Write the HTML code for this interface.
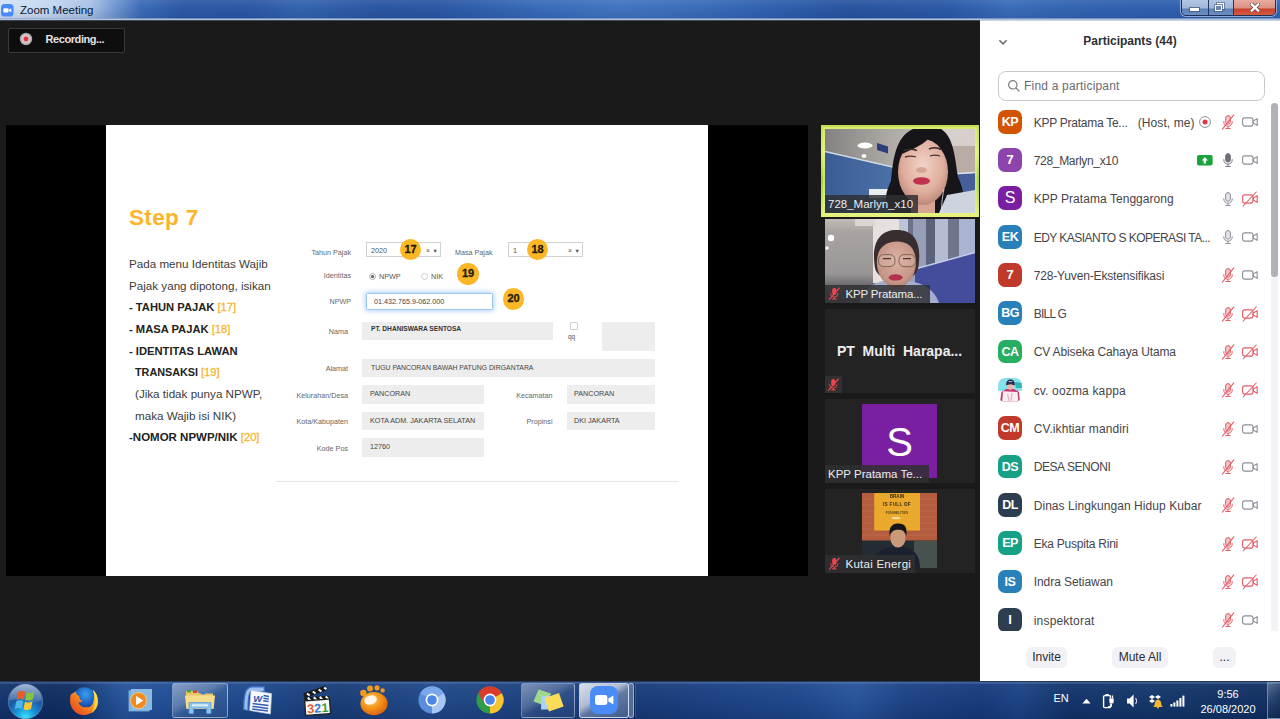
<!DOCTYPE html>
<html lang="en">
<head>
<meta charset="utf-8">
<title>Zoom Meeting</title>
<style>
html,body{margin:0;padding:0;}
body{width:1280px;height:719px;overflow:hidden;background:#1a1a1a;position:relative;font-family:"Liberation Sans","DejaVu Sans",sans-serif;}
.abs{position:absolute;}
#stage{position:absolute;left:0;top:0;width:1280px;height:719px;overflow:hidden;background:#1a1a1a;}
/* title bar */
#titlebar{left:0;top:0;width:1280px;height:20px;background:linear-gradient(90deg,#d3e2f5 0px,#c3d6ef 50px,#a9c3e6 90px,#6f97d0 115px,#3d6cb8 140px,#2c59a6 180px,#2b58a5 250px,#3463af 300px,#2a56a2 380px,#2b58a5 440px,#386bb9 540px,#4174c1 620px,#3a6cba 700px,#2f5fae 780px,#28549f 850px,#2c5aa8 950px,#3a6cba 1010px,#3465b3 1060px,#2f5fae 1150px,#3566b3 1280px);}
#titlebar .shade{left:0;top:0;width:1280px;height:20px;background:linear-gradient(180deg,rgba(255,255,255,.08) 0,rgba(255,255,255,0) 8px,rgba(0,0,30,.08) 17px,rgba(0,0,30,.10) 18px,rgba(140,165,205,.75) 18px,rgba(140,165,205,.75) 19px,rgba(176,194,222,1) 19px,rgba(176,194,222,1) 20px);}
#ttext{left:20px;top:3px;font-size:11.5px;line-height:15px;color:#0b1a33;white-space:nowrap;}
/* recording */
#rec{left:8px;top:28px;width:115px;height:23px;border:1px solid #3a3a3a;border-radius:2px;background:#0e0e0e;}
#rec span{position:absolute;left:36.5px;top:3px;font-size:11px;line-height:14px;font-weight:bold;color:#e2e2e2;white-space:nowrap;letter-spacing:-.42px;}
/* share area */
#share{left:6px;top:125px;width:802px;height:451px;background:#000;}
#slide{left:100px;top:0;width:601.5px;height:451px;background:#fff;overflow:hidden;}
.st{position:absolute;white-space:nowrap;color:#3c3c3c;font-size:11.65px;line-height:14px;}
.sb{font-weight:bold;color:#222;font-size:11.2px;}
.y{color:#f6b62e;font-weight:normal;font-size:11.2px;-webkit-text-stroke:.3px #f6b62e;}
.lab{position:absolute;white-space:nowrap;color:#666;font-size:7.2px;line-height:9px;text-align:right;}
.fld{position:absolute;background:#ededed;}
.fld span{position:absolute;left:8px;top:4.3px;white-space:nowrap;font-size:7.2px;line-height:9px;color:#444;}
.num{position:absolute;width:21.6px;height:21.6px;border-radius:50%;background:#fbb726;color:#221b06;font-weight:bold;font-size:11px;line-height:21.6px;text-align:center;-webkit-text-stroke:.3px #221b06;margin:-.8px 0 0 -.3px;}
/* thumbs */
.th{position:absolute;left:824.5px;width:150px;height:84px;background:#232323;overflow:hidden;}
.tl{position:absolute;left:0;bottom:0;height:17px;background:rgba(48,48,50,.84);color:#ececec;font-size:11.5px;line-height:17px;white-space:nowrap;padding:0 4px 0 4px;}
/* panel */
#panel{left:980px;top:20px;width:300px;height:661px;background:#fff;}
.row{position:absolute;left:0;width:300px;height:38px;}
.av{position:absolute;left:18px;top:-.3px;width:24px;height:23.8px;border-radius:7px;color:#fff;font-weight:bold;font-size:12.5px;line-height:24px;text-align:center;letter-spacing:-.5px;}
.nm{position:absolute;left:53.7px;top:4.6px;font-size:12px;line-height:16px;color:#45454b;white-space:nowrap;}
.btn{position:absolute;top:627px;height:21px;border-radius:6px;background:#f1f1f6;color:#2a2a30;font-size:12px;line-height:21px;text-align:center;}
/* taskbar */
#taskbar{left:0;top:681px;width:1280px;height:38px;background:linear-gradient(90deg,#12336c 0,#0e2b60 50px,#0f2d63 75px,#1b4485 100px,#245399 125px,#1f4d94 170px,#1c4688 260px,#183c77 340px,#1f4887 430px,#1b4180 520px,#173a78 640px,#1a4284 740px,#1d478a 800px,#25539a 855px,#1b4283 905px,#16397a 980px,#1a4283 1020px,#123269 1070px,#133569 1150px,#102e60 1280px);}
#taskbar .shade{left:0;top:0;width:1280px;height:38px;background:linear-gradient(180deg,rgba(40,55,85,.85) 0,rgba(40,55,85,.85) 1px,rgba(120,150,195,.42) 1px,rgba(110,140,190,.36) 3px,rgba(255,255,255,.05) 3px,rgba(255,255,255,.02) 16px,rgba(0,0,20,.10) 38px);}
.tray{position:absolute;color:#fff;font-size:11px;line-height:13px;white-space:nowrap;}
</style>
</head>
<body>
<div id="stage">

<!-- TITLE BAR -->
<div id="titlebar" class="abs">
  <div class="shade abs"></div>
  <svg class="abs" style="left:1px;top:4px" width="12.6" height="12.6" viewBox="0 0 14 14"><rect x="0" y="0" width="14" height="14" rx="4" fill="#4a8cf7"/><rect x="2.6" y="4.6" width="5.8" height="4.8" rx="1.2" fill="#fff"/><path d="M8.9 6.3 L11.4 4.8 V9.2 L8.9 7.7Z" fill="#fff"/></svg>
  <div id="ttext" class="abs">Zoom Meeting</div>
  <!-- window buttons -->
  <div class="abs" style="left:1181px;top:-3px;width:95px;height:19px;border:1px solid #1c2f55;border-radius:0 0 5px 5px;box-sizing:border-box;overflow:hidden;box-shadow:0 0 0 1px rgba(220,232,250,.55);">
    <div class="abs" style="left:0;top:0;width:26px;height:19px;background:linear-gradient(180deg,#b8cbe6 0,#9db6da 10px,#5c80b8 11px,#6f93c8 19px);border-right:1px solid #23375e;"></div>
    <div class="abs" style="left:27px;top:0;width:24px;height:19px;background:linear-gradient(180deg,#b8cbe6 0,#9db6da 10px,#5c80b8 11px,#6f93c8 19px);border-right:1px solid #23375e;"></div>
    <div class="abs" style="left:52px;top:0;width:43px;height:19px;background:linear-gradient(180deg,#e9b3a8 0,#dc8f82 10px,#c8402c 11px,#d8654c 19px);"></div>
    <div class="abs" style="left:8px;top:10px;width:9px;height:3px;background:#fff;box-shadow:0 0 0 1px rgba(60,70,90,.6);"></div>
    <div class="abs" style="left:35px;top:5px;width:7px;height:6px;border:1.5px solid #fff;box-sizing:border-box;box-shadow:0 0 0 1px rgba(60,70,90,.5);"></div>
    <div class="abs" style="left:33px;top:7px;width:7px;height:6px;border:1.5px solid #fff;background:#6a84b0;box-sizing:border-box;box-shadow:0 0 0 1px rgba(60,70,90,.5);"></div>
    <svg class="abs" style="left:68px;top:5px" width="10" height="9" viewBox="0 0 10 9"><path d="M1.8 1.4 L8.2 7.6 M8.2 1.4 L1.8 7.6" stroke="#5a4040" stroke-width="3.6" stroke-linecap="square"/><path d="M1.8 1.4 L8.2 7.6 M8.2 1.4 L1.8 7.6" stroke="#fff" stroke-width="2.3" stroke-linecap="square"/></svg>
  </div>
</div>

<div id="tline" class="abs" style="left:0;top:20px;width:1280px;height:1px;background:rgba(120,140,175,.4);z-index:5"></div>
<!-- RECORDING -->
<div id="rec" class="abs">
  <svg class="abs" style="left:10px;top:3px" width="14" height="14" viewBox="0 0 14 14"><circle cx="7" cy="7" r="6.2" fill="#a9a9a9"/><circle cx="7" cy="7" r="4.8" fill="#d4c8c8"/><circle cx="7" cy="7" r="2.4" fill="#e6343c"/></svg>
  <span>Recording...</span>
</div>

<!-- SHARE AREA -->
<div id="share" class="abs">
 <div id="slide" class="abs">
<!--SLIDE-START-->
  <div class="st" style="left:23px;top:78.7px;font-size:22.6px;line-height:28px;font-weight:bold;color:#fbb42c;letter-spacing:.3px;">Step 7</div>
  <div class="st" style="left:23px;top:132px;">Pada menu Identitas Wajib</div>
  <div class="st" style="left:23px;top:154px;">Pajak yang dipotong, isikan</div>
  <div class="st sb" style="left:23px;top:175px;">- TAHUN PAJAK <span class="y">[17]</span></div>
  <div class="st sb" style="left:23px;top:196.5px;">- MASA PAJAK <span class="y">[18]</span></div>
  <div class="st sb" style="left:23px;top:218.5px;">- IDENTITAS LAWAN</div>
  <div class="st sb" style="left:29px;top:240px;font-size:10.8px">TRANSAKSI <span class="y">[19]</span></div>
  <div class="st" style="left:29px;top:262px;">(Jika tidak punya NPWP,</div>
  <div class="st" style="left:29px;top:283.5px;">maka Wajib isi NIK)</div>
  <div class="st sb" style="left:23px;top:305px;font-size:11.5px;">-NOMOR NPWP/NIK <span class="y">[20]</span></div>

  <!-- form -->
  <div class="lab" style="left:185px;width:60px;top:122.5px;">Tahun Pajak</div>
  <div class="abs" style="left:260px;top:117px;width:74.5px;height:15px;border:1px solid #d2d2d2;box-sizing:border-box;background:#fff;"></div>
  <div class="lab" style="left:265px;top:120.5px;color:#555;">2020</div>
  <div class="lab" style="left:320px;top:120.5px;color:#555;font-size:7px;">×</div><div class="lab" style="left:327.5px;top:120.5px;color:#555;font-size:6.5px;">▾</div>
  <div class="num" style="left:294px;top:114.5px;">17</div>
  <div class="lab" style="left:349px;top:122.5px;">Masa Pajak</div>
  <div class="abs" style="left:401.5px;top:117px;width:75.5px;height:15px;border:1px solid #d2d2d2;box-sizing:border-box;background:#fff;"></div>
  <div class="lab" style="left:407px;top:120.5px;color:#555;">1</div>
  <div class="lab" style="left:462px;top:120.5px;color:#555;font-size:7px;">×</div><div class="lab" style="left:469.5px;top:120.5px;color:#555;font-size:6.5px;">▾</div>
  <div class="num" style="left:421px;top:114.5px;">18</div>

  <div class="lab" style="left:185px;width:60px;top:146px;">Identitas</div>
  <div class="abs" style="left:263px;top:147.5px;width:7px;height:7px;border-radius:50%;border:1px solid #aaa;box-sizing:border-box;background:#fff;"></div>
  <div class="abs" style="left:265px;top:149.5px;width:3px;height:3px;border-radius:50%;background:#555;"></div>
  <div class="lab" style="left:273px;top:146.5px;color:#555;">NPWP</div>
  <div class="abs" style="left:314.5px;top:147.5px;width:7px;height:7px;border-radius:50%;border:1px solid #ccc;box-sizing:border-box;background:#fff;"></div>
  <div class="lab" style="left:325px;top:146.5px;color:#555;">NIK</div>
  <div class="num" style="left:351.5px;top:139px;">19</div>

  <div class="lab" style="left:185px;width:60px;top:172px;">NPWP</div>
  <div class="abs" style="left:260px;top:167.5px;width:126.5px;height:17.5px;border:1px solid #9cc8f0;box-sizing:border-box;background:#fff;box-shadow:0 0 5px 1px rgba(120,180,240,.6);border-radius:1.5px;"></div>
  <div class="lab" style="left:268px;top:171.5px;color:#444;">01.432.765.9-062.000</div>
  <div class="num" style="left:397px;top:164px;">20</div>

  <div class="lab" style="left:185px;width:57px;top:202px;">Nama</div>
  <div class="fld" style="left:256px;top:196.5px;width:190.5px;height:18.5px;"><span style="top:2.8px;left:9px;color:#333;font-weight:bold;font-size:6.6px">PT. DHANISWARA SENTOSA</span></div>
  <div class="abs" style="left:464px;top:197px;width:8px;height:8px;border:1px solid #d0d0d0;box-sizing:border-box;border-radius:1px;background:#fff;"></div>
  <div class="lab" style="left:462px;top:206.5px;color:#555;font-size:6.5px;">qq</div>
  <div class="fld" style="left:495.5px;top:196.5px;width:53px;height:29px;"></div>

  <div class="lab" style="left:185px;width:57px;top:239px;">Alamat</div>
  <div class="fld" style="left:256px;top:234px;width:292.5px;height:18px;"><span style="left:9px;top:3.6px;font-size:6.88px">TUGU PANCORAN BAWAH PATUNG DIRGANTARA</span></div>

  <div class="lab" style="left:185px;width:57px;top:265.5px;">Kelurahan/Desa</div>
  <div class="fld" style="left:256px;top:260px;width:122px;height:18.5px;"><span>PANCORAN</span></div>
  <div class="lab" style="left:390px;width:56.5px;top:265.5px;">Kecamatan</div>
  <div class="fld" style="left:461px;top:260px;width:87.5px;height:18.5px;"><span style="left:7px">PANCORAN</span></div>

  <div class="lab" style="left:185px;width:57px;top:292px;">Kota/Kabupaten</div>
  <div class="fld" style="left:256px;top:286.5px;width:122px;height:18.5px;"><span>KOTA ADM. JAKARTA SELATAN</span></div>
  <div class="lab" style="left:390px;width:56.5px;top:292px;">Propinsi</div>
  <div class="fld" style="left:461px;top:286.5px;width:87.5px;height:18.5px;"><span style="left:7px">DKI JAKARTA</span></div>

  <div class="lab" style="left:185px;width:57px;top:318.5px;">Kode Pos</div>
  <div class="fld" style="left:256px;top:313px;width:122px;height:18.5px;"><span>12760</span></div>

  <div class="abs" style="left:170px;top:355.5px;width:403px;height:1px;background:#e4e4e4;"></div>
<!--SLIDE-END-->
 </div>
</div>

<!--THUMBS-START-->
<div class="abs" style="left:821px;top:125px;width:158px;height:92px;background:linear-gradient(180deg,#c3dc52 0,#dff07a 30%,#a6d43a 60%,#e6f27c 100%);"></div>
<div class="abs" style="left:823px;top:127px;width:154px;height:88px;background:#e6f590;opacity:.55"></div>
<div class="th" style="top:129px;left:825px;width:149.5px">
<svg class="abs" style="left:0;top:0;filter:blur(.7px)" width="150" height="84" viewBox="0 0 150 84">
<defs><linearGradient id="c1" x1="0" x2="1" y1="0" y2="0"><stop offset="0" stop-color="#858180"/><stop offset=".3" stop-color="#a19e9a"/><stop offset=".6" stop-color="#bdb7b2"/><stop offset="1" stop-color="#cfc7c2"/></linearGradient>
<linearGradient id="b1" x1="0" x2="1"><stop offset="0" stop-color="#3a5c94"/><stop offset="1" stop-color="#4c72aa"/></linearGradient>
<radialGradient id="f1" cx=".5" cy=".4" r=".62"><stop offset="0" stop-color="#f1d3c8"/><stop offset=".65" stop-color="#dfae9d"/><stop offset="1" stop-color="#bb8474"/></radialGradient></defs>
<rect width="150" height="84" fill="url(#c1)"/>
<path d="M0 23 L70 39 L70 84 L0 84Z" fill="url(#b1)"/>
<path d="M0 22.5 L70 38.5" stroke="#cfd8e6" stroke-width="1.6"/>
<rect x="118" y="17" width="32" height="29" fill="#b9aca4"/>
<rect x="118" y="0" width="32" height="17" fill="#d6cfcb"/>
<path d="M118 46 L150 44 V84 H118Z" fill="#465f98"/>
<path d="M118 45.5 L150 43.5" stroke="#dde2ee" stroke-width="1.6"/>
<ellipse cx="40" cy="16.5" rx="7.5" ry="3" fill="#fff"/><ellipse cx="39" cy="27" rx="2.5" ry="2" fill="#f4f4f4"/>
<path d="M52 14 L63 17.5 V24.5 L52 21Z" fill="#2b3d7a"/>
<path d="M44 60 h19 v9 h-19z" fill="#e9edf2"/>
<path d="M72 84 C57 84 59 66 66 52 C68 32 70 8 88 0 L116 0 C129 8 130 30 133 48 C139 60 141 76 135 84Z" fill="#15151a"/>
<path d="M122 66 L150 61 V84 H114Z" fill="#cdd3df"/>
<path d="M86 62 h24 v22 h-24z" fill="#d7a594"/>
<ellipse cx="98" cy="43" rx="25" ry="33" fill="url(#f1)"/>
<path d="M71 40 C72 10 90 0 108 3 C121 7 126 22 125 38 C120 22 112 11 104 9 C96 18 82 22 75 26 C73 30 72 35 71 40Z" fill="#15151a"/>
<path d="M79 21.5 q7 -2.5 13 0 M104 20 q7 -2.5 12 .5" stroke="#3a2a28" stroke-width="1.5" fill="none"/>
<path d="M80 28 q6 -1.6 11 0 M105 27 q5 -1.6 10 0" stroke="#4a3430" stroke-width="1.3" fill="none"/>
<ellipse cx="96.5" cy="41" rx="5.5" ry="3" fill="#c48c7e" opacity=".6"/>
<ellipse cx="96.5" cy="52" rx="8.5" ry="3.8" fill="#c2324e"/>
<path d="M119 60 C117 70 116 78 117 84" stroke="#e8e8ee" stroke-width=".8" fill="none"/>
</svg>
<div class="tl" style="height:18px;line-height:19px;padding-left:3px;width:86px;">728_Marlyn_x10</div></div>
<div class="th" style="top:219px">
<svg class="abs" style="left:0;top:0;filter:blur(.7px)" width="150" height="84" viewBox="0 0 150 84">
<defs><linearGradient id="w2" x1="0" x2="0" y1="0" y2="1"><stop offset="0" stop-color="#c2bcb8"/><stop offset=".15" stop-color="#a9a4a2"/><stop offset=".65" stop-color="#999596"/><stop offset=".78" stop-color="#6f6d72"/><stop offset="1" stop-color="#5e5d66"/></linearGradient>
<radialGradient id="f2" cx=".5" cy=".45" r=".62"><stop offset="0" stop-color="#dcb3a6"/><stop offset=".75" stop-color="#c69586"/><stop offset="1" stop-color="#a07064"/></radialGradient></defs>
<rect width="150" height="84" fill="#98a2be"/>
<rect width="50" height="84" fill="url(#w2)"/>
<rect x="48" y="0" width="27" height="64" fill="#e6e1de"/>
<rect x="30" y="0" width="20" height="7" fill="#dcd6d2"/>
<rect x="74" y="0" width="9" height="52" fill="#bcc4d8"/><rect x="83" y="0" width="5" height="52" fill="#6a738a"/><rect x="88" y="0" width="13" height="50" fill="#979fb8"/><rect x="101" y="0" width="9" height="47" fill="#5a6379"/><rect x="110" y="0" width="13" height="44" fill="#b4bcd2"/><rect x="123" y="0" width="11" height="41" fill="#6e768e"/><rect x="134" y="0" width="16" height="38" fill="#aab4d0"/>
<path d="M90 50 L150 33.4 V84 H90Z" fill="#444c9c"/>
<path d="M90 50 L150 33.4" stroke="#c3cbe6" stroke-width="1.5"/>
<circle cx="6" cy="19" r="3.2" fill="#fff"/><circle cx="2" cy="29" r="1.8" fill="#f2f2f2"/>
<path d="M34 84 C38 68 52 61 70 61 C90 61 108 66 114 84Z" fill="#a4acd0"/>
<path d="M62 58 h18 v12 h-18z" fill="#c08e80"/>
<path d="M49.6 46 C46 20 58 10.6 72 11 C88 11 97 22 93.6 46 C93 52 90 56 86 58 L58 58 C53 56 50 52 49.6 46Z" fill="#382e30"/>
<ellipse cx="71.4" cy="43.6" rx="19.6" ry="24.4" fill="url(#f2)"/>
<path d="M51.4 37 C52 21 62 15 72 15 C84 15 91.4 21 92 37 C88 27 82 22.6 72 22.4 C62 22.6 55 27 51.4 37Z" fill="#382e30"/>
<rect x="53.6" y="35.6" width="16.4" height="12" rx="5" fill="#d9b7aa" fill-opacity=".35" stroke="#7a6656" stroke-width="1"/><rect x="74" y="35.6" width="16.4" height="12" rx="5" fill="#d9b7aa" fill-opacity=".35" stroke="#7a6656" stroke-width="1"/>
<path d="M58 39.6 h8 M78 39.6 h8" stroke="#4a3a36" stroke-width="1.2"/>
<ellipse cx="70.6" cy="58.4" rx="7" ry="3.2" fill="#b5304e"/>
</svg>
<div class="tl" style="height:18px;line-height:19px;padding-left:21px;width:80px;letter-spacing:-.16px">KPP Pratama...</div><svg class="abs" style="left:3px;top:68.2px" width="12.6" height="13.4" viewBox="0 0 13 14"><rect x="4.3" y="1" width="4.4" height="7.4" rx="2.2" fill="#e8464e"/><path d="M2.6 6.2 V6.6 A3.9 3.9 0 0 0 10.4 6.6 V6.2" fill="none" stroke="#e8464e" stroke-width="1"/><path d="M6.5 10.4 V12.2 M4.4 12.4 H8.6" stroke="#e8464e" stroke-width="1.1"/><path d="M12 0.8 L1.2 13.2" stroke="#e8464e" stroke-width="1.3"/></svg></div>
<div class="th" style="top:309px">
<div class="abs" style="left:0;top:32.6px;width:150px;text-align:center;font-weight:bold;font-size:14px;line-height:18px;color:#ededed;white-space:nowrap;">PT&nbsp; Multi&nbsp; Harapa...</div>
<div class="abs" style="left:0;top:67px;width:17px;height:17px;background:#313131;"></div><svg class="abs" style="left:2px;top:68.5px" width="12.6" height="13.4" viewBox="0 0 13 14"><rect x="4.3" y="1" width="4.4" height="7.4" rx="2.2" fill="#e8464e"/><path d="M2.6 6.2 V6.6 A3.9 3.9 0 0 0 10.4 6.6 V6.2" fill="none" stroke="#e8464e" stroke-width="1"/><path d="M6.5 10.4 V12.2 M4.4 12.4 H8.6" stroke="#e8464e" stroke-width="1.1"/><path d="M12 0.8 L1.2 13.2" stroke="#e8464e" stroke-width="1.3"/></svg></div>
<div class="th" style="top:399px">
<div class="abs" style="left:37.8px;top:4.9px;width:74.6px;height:74.6px;background:#7b1fa2;color:#fff;font-size:40px;line-height:76px;text-align:center;">S</div>
<div class="tl" style="height:18px;line-height:19px;padding-left:3.5px;width:97px;">KPP Pratama Te...</div></div>
<div class="th" style="top:489px">
<svg class="abs" style="left:37.8px;top:4.4px;filter:blur(.45px)" width="75" height="75" viewBox="0 0 75 75">
<rect width="75" height="75" fill="#b35c3e"/>
<g stroke="#c98268" stroke-width=".6" opacity=".7"><path d="M0 6H75M0 12H75M0 18H75M0 24H75M0 30H75M0 36H75M0 42H75"/></g>
<rect x="12.2" y="0" width="45.8" height="37.5" fill="#eaa82c"/>
<text x="35" y="4.5" font-family="Liberation Sans, sans-serif" font-weight="bold" font-size="4.6" text-anchor="middle" fill="#3a2c10">BRAIN</text>
<text x="35" y="13.2" font-family="Liberation Sans, sans-serif" font-weight="bold" font-size="4.6" text-anchor="middle" fill="#3a2c10" letter-spacing=".3">IS FULL OF</text>
<text x="35" y="20.6" font-family="Liberation Sans, sans-serif" font-weight="bold" font-size="2.6" text-anchor="middle" fill="#4a3812" letter-spacing=".3">POSSIBILITIES</text>
<ellipse cx="34" cy="25" rx="4.5" ry="1.3" fill="#f6dc9a"/>
<rect x="0" y="47.5" width="75" height="27.5" fill="#232b33"/>
<rect x="52" y="48" width="23" height="27" fill="#47524f"/>
<path d="M8 75 C10 58 22 54 36 54 C50 54 58 60 58 75Z" fill="#1b2130"/>
<ellipse cx="36" cy="45" rx="7.6" ry="9.6" fill="#c9997a"/>
<path d="M27.6 43 C26.5 33 31 30.6 36.5 30.6 C42.5 30.6 45.6 34 44.4 43 C43 38 40 36.6 36 36.8 C32 36.8 29 38.4 27.6 43Z" fill="#15151a"/>
</svg>
<div class="tl" style="height:18px;line-height:19px;padding-left:21px;width:65.5px;letter-spacing:.25px">Kutai Energi</div><svg class="abs" style="left:3px;top:68.2px" width="12.6" height="13.4" viewBox="0 0 13 14"><rect x="4.3" y="1" width="4.4" height="7.4" rx="2.2" fill="#e8464e"/><path d="M2.6 6.2 V6.6 A3.9 3.9 0 0 0 10.4 6.6 V6.2" fill="none" stroke="#e8464e" stroke-width="1"/><path d="M6.5 10.4 V12.2 M4.4 12.4 H8.6" stroke="#e8464e" stroke-width="1.1"/><path d="M12 0.8 L1.2 13.2" stroke="#e8464e" stroke-width="1.3"/></svg></div>
<!--THUMBS-END-->

<!-- PANEL -->
<div id="panel" class="abs">
<!--PANEL-START-->
 <svg class="abs" style="left:17px;top:17px" width="12" height="10" viewBox="0 0 12 10"><path d="M2.4 3.2 L6 6.8 L9.6 3.2" fill="none" stroke="#6e6e78" stroke-width="1.6"/></svg>
 <div class="abs" style="left:0;top:13px;width:300px;text-align:center;font-weight:bold;font-size:12px;line-height:16px;color:#2f2f35;">Participants (44)</div>
 <div class="abs" style="left:18px;top:51px;width:267px;height:30px;border:1px solid #c9c9cf;border-radius:8px;box-sizing:border-box;"></div>
 <svg class="abs" style="left:27px;top:59px" width="14" height="14" viewBox="0 0 14 14"><circle cx="5.8" cy="5.8" r="4.2" fill="none" stroke="#7a7a84" stroke-width="1.2"/><path d="M8.9 8.9 L12.4 12.4" stroke="#7a7a84" stroke-width="1.3"/></svg>
 <div class="abs" style="left:44px;top:57.5px;font-size:12px;line-height:16px;color:#6a6a72;letter-spacing:.2px;">Find a participant</div>
 <div class="abs" style="left:291px;top:83px;width:7px;height:528px;background:#f2f2f7;"></div>
 <div class="abs" style="left:291px;top:83px;width:7px;height:174px;background:#b1b1bb;border-radius:3.5px;"></div>
 <div class="abs" style="left:0;top:611px;width:300px;height:50px;background:#fff;"></div>
<div class="row" style="top:90.0px">
<div class="av" style="background:#d35400;">KP</div>
<div class="nm" style="letter-spacing:-0.26px">KPP Pratama Te...<span style="position:absolute;left:104px;top:0;letter-spacing:.1px">(Host, me)</span></div>
<svg class="abs" style="left:218px;top:5px" width="14" height="14" viewBox="0 0 14 14"><circle cx="7" cy="7" r="5.4" fill="none" stroke="#8e8e9a" stroke-width="1"/><circle cx="7" cy="7" r="2.5" fill="#e63946"/></svg>
<svg class="abs" style="left:240px;top:4px" width="16" height="16" viewBox="0 0 16 16" fill="none" stroke="#e35d66" stroke-width="1" stroke-linecap="round"><rect x="5.6" y="1.6" width="4.8" height="8.6" rx="2.4" fill="#f6c6c9"/><path d="M3.8 7.6 V8 A4.2 4.2 0 0 0 12.2 8 V7.6"/><path d="M8 12.4 V14.4 M5.8 14.5 H10.2"/><path d="M13.8 0.8 L2.4 15.2" stroke-width="1.05"/></svg>
<svg class="abs" style="left:261px;top:4px" width="18" height="16" viewBox="0 0 18 16" fill="none" stroke="#8e8e9a" stroke-width="1.1" stroke-linejoin="round" stroke-linecap="round"><rect x="1.6" y="3.9" width="10.4" height="8.2" rx="2"/><path d="M12.3 7 L16.2 4.6 V11.4 L12.3 9 Z"/></svg>
</div>
<div class="row" style="top:128.3px">
<div class="av" style="background:#8e44ad;font-size:13px;letter-spacing:0;">7</div>
<div class="nm" style="letter-spacing:-0.31px">728_Marlyn_x10</div>
<svg class="abs" style="left:217px;top:6.5px" width="16" height="11" viewBox="0 0 16 11"><rect width="15.6" height="10.6" rx="2" fill="#19a33a"/><path d="M7.8 2.2 L11 5.6 H9 V8.4 H6.6 V5.6 H4.6Z" fill="#fff"/></svg>
<svg class="abs" style="left:240px;top:4px" width="16" height="16" viewBox="0 0 16 16" fill="none" stroke="#7a7a86" stroke-width="1" stroke-linecap="round"><rect x="5.6" y="1.6" width="4.8" height="8.6" rx="2.4" fill="#6e6e7a"/><path d="M3.8 7.6 V8 A4.2 4.2 0 0 0 12.2 8 V7.6"/><path d="M8 12.4 V14.4 M5.8 14.5 H10.2"/></svg>
<svg class="abs" style="left:261px;top:4px" width="18" height="16" viewBox="0 0 18 16" fill="none" stroke="#8e8e9a" stroke-width="1.1" stroke-linejoin="round" stroke-linecap="round"><rect x="1.6" y="3.9" width="10.4" height="8.2" rx="2"/><path d="M12.3 7 L16.2 4.6 V11.4 L12.3 9 Z"/></svg>
</div>
<div class="row" style="top:166.6px">
<div class="av" style="background:#7b1fa2;font-size:16px;font-weight:normal;letter-spacing:0;">S</div>
<div class="nm" style="letter-spacing:0.05px">KPP Pratama Tenggarong</div>
<svg class="abs" style="left:240px;top:4px" width="16" height="16" viewBox="0 0 16 16" fill="none" stroke="#8e8e9a" stroke-width="1" stroke-linecap="round"><rect x="5.6" y="1.6" width="4.8" height="8.6" rx="2.4" fill="#e4e4ea"/><path d="M3.8 7.6 V8 A4.2 4.2 0 0 0 12.2 8 V7.6"/><path d="M8 12.4 V14.4 M5.8 14.5 H10.2"/></svg>
<svg class="abs" style="left:261px;top:4px" width="18" height="16" viewBox="0 0 18 16" fill="none" stroke="#e35d66" stroke-width="1.1" stroke-linejoin="round" stroke-linecap="round"><rect x="1.6" y="3.9" width="10.4" height="8.2" rx="2"/><path d="M12.3 7 L16.2 4.6 V11.4 L12.3 9 Z"/><path d="M15.2 1 L2.2 15"/></svg>
</div>
<div class="row" style="top:205.0px">
<div class="av" style="background:#2980b9;">EK</div>
<div class="nm" style="letter-spacing:-0.53px">EDY KASIANTO S KOPERASI TA...</div>
<svg class="abs" style="left:240px;top:4px" width="16" height="16" viewBox="0 0 16 16" fill="none" stroke="#8e8e9a" stroke-width="1" stroke-linecap="round"><rect x="5.6" y="1.6" width="4.8" height="8.6" rx="2.4" fill="#e4e4ea"/><path d="M3.8 7.6 V8 A4.2 4.2 0 0 0 12.2 8 V7.6"/><path d="M8 12.4 V14.4 M5.8 14.5 H10.2"/></svg>
<svg class="abs" style="left:261px;top:4px" width="18" height="16" viewBox="0 0 18 16" fill="none" stroke="#8e8e9a" stroke-width="1.1" stroke-linejoin="round" stroke-linecap="round"><rect x="1.6" y="3.9" width="10.4" height="8.2" rx="2"/><path d="M12.3 7 L16.2 4.6 V11.4 L12.3 9 Z"/></svg>
</div>
<div class="row" style="top:243.3px">
<div class="av" style="background:#c0392b;font-size:13px;letter-spacing:0;">7</div>
<div class="nm" style="letter-spacing:-0.15px">728-Yuven-Ekstensifikasi</div>
<svg class="abs" style="left:240px;top:4px" width="16" height="16" viewBox="0 0 16 16" fill="none" stroke="#e35d66" stroke-width="1" stroke-linecap="round"><rect x="5.6" y="1.6" width="4.8" height="8.6" rx="2.4" fill="#f6c6c9"/><path d="M3.8 7.6 V8 A4.2 4.2 0 0 0 12.2 8 V7.6"/><path d="M8 12.4 V14.4 M5.8 14.5 H10.2"/><path d="M13.8 0.8 L2.4 15.2" stroke-width="1.05"/></svg>
<svg class="abs" style="left:261px;top:4px" width="18" height="16" viewBox="0 0 18 16" fill="none" stroke="#8e8e9a" stroke-width="1.1" stroke-linejoin="round" stroke-linecap="round"><rect x="1.6" y="3.9" width="10.4" height="8.2" rx="2"/><path d="M12.3 7 L16.2 4.6 V11.4 L12.3 9 Z"/></svg>
</div>
<div class="row" style="top:281.6px">
<div class="av" style="background:#2980b9;">BG</div>
<div class="nm" style="letter-spacing:-0.75px">BILL G</div>
<svg class="abs" style="left:240px;top:4px" width="16" height="16" viewBox="0 0 16 16" fill="none" stroke="#e35d66" stroke-width="1" stroke-linecap="round"><rect x="5.6" y="1.6" width="4.8" height="8.6" rx="2.4" fill="#f6c6c9"/><path d="M3.8 7.6 V8 A4.2 4.2 0 0 0 12.2 8 V7.6"/><path d="M8 12.4 V14.4 M5.8 14.5 H10.2"/><path d="M13.8 0.8 L2.4 15.2" stroke-width="1.05"/></svg>
<svg class="abs" style="left:261px;top:4px" width="18" height="16" viewBox="0 0 18 16" fill="none" stroke="#e35d66" stroke-width="1.1" stroke-linejoin="round" stroke-linecap="round"><rect x="1.6" y="3.9" width="10.4" height="8.2" rx="2"/><path d="M12.3 7 L16.2 4.6 V11.4 L12.3 9 Z"/><path d="M15.2 1 L2.2 15"/></svg>
</div>
<div class="row" style="top:319.9px">
<div class="av" style="background:#27ae60;">CA</div>
<div class="nm" style="letter-spacing:-0.14px">CV Abiseka Cahaya Utama</div>
<svg class="abs" style="left:240px;top:4px" width="16" height="16" viewBox="0 0 16 16" fill="none" stroke="#e35d66" stroke-width="1" stroke-linecap="round"><rect x="5.6" y="1.6" width="4.8" height="8.6" rx="2.4" fill="#f6c6c9"/><path d="M3.8 7.6 V8 A4.2 4.2 0 0 0 12.2 8 V7.6"/><path d="M8 12.4 V14.4 M5.8 14.5 H10.2"/><path d="M13.8 0.8 L2.4 15.2" stroke-width="1.05"/></svg>
<svg class="abs" style="left:261px;top:4px" width="18" height="16" viewBox="0 0 18 16" fill="none" stroke="#e35d66" stroke-width="1.1" stroke-linejoin="round" stroke-linecap="round"><rect x="1.6" y="3.9" width="10.4" height="8.2" rx="2"/><path d="M12.3 7 L16.2 4.6 V11.4 L12.3 9 Z"/><path d="M15.2 1 L2.2 15"/></svg>
</div>
<div class="row" style="top:358.2px">
<svg class="av" style="border-radius:7px;filter:blur(.35px)" width="24" height="24" viewBox="0 0 24 24"><rect width="24" height="24" fill="#fdfdfd"/><rect width="24" height="13" fill="#86e2ea"/><path d="M17 4 L24 5 V10 L18 10Z" fill="#2fb4b8"/><path d="M2 24 L3.4 14 Q12 7 21 14 L22 24Z" fill="#c8356f"/><path d="M5 13.4 L19.6 14 L20.4 24 H4Z" fill="#f6eef2"/><path d="M9.6 16 L11 23 M14 15 L13 23" stroke="#e7a9c6" stroke-width="1.2"/><ellipse cx="12.4" cy="8.6" rx="3" ry="3.3" fill="#e9b9b0"/><path d="M8 7.4 Q8 1.6 12.4 1.6 Q17 1.6 17 7.4 L15.4 7 Q12.4 5.4 9.6 7Z" fill="#28324f"/><path d="M10.4 3.6 h4" stroke="#c9d3e6" stroke-width=".8"/></svg>
<div class="nm" style="letter-spacing:0.16px">cv. oozma kappa</div>
<svg class="abs" style="left:240px;top:4px" width="16" height="16" viewBox="0 0 16 16" fill="none" stroke="#e35d66" stroke-width="1" stroke-linecap="round"><rect x="5.6" y="1.6" width="4.8" height="8.6" rx="2.4" fill="#f6c6c9"/><path d="M3.8 7.6 V8 A4.2 4.2 0 0 0 12.2 8 V7.6"/><path d="M8 12.4 V14.4 M5.8 14.5 H10.2"/><path d="M13.8 0.8 L2.4 15.2" stroke-width="1.05"/></svg>
<svg class="abs" style="left:261px;top:4px" width="18" height="16" viewBox="0 0 18 16" fill="none" stroke="#e35d66" stroke-width="1.1" stroke-linejoin="round" stroke-linecap="round"><rect x="1.6" y="3.9" width="10.4" height="8.2" rx="2"/><path d="M12.3 7 L16.2 4.6 V11.4 L12.3 9 Z"/><path d="M15.2 1 L2.2 15"/></svg>
</div>
<div class="row" style="top:396.6px">
<div class="av" style="background:#c0392b;">CM</div>
<div class="nm" style="letter-spacing:0.08px">CV.ikhtiar mandiri</div>
<svg class="abs" style="left:240px;top:4px" width="16" height="16" viewBox="0 0 16 16" fill="none" stroke="#e35d66" stroke-width="1" stroke-linecap="round"><rect x="5.6" y="1.6" width="4.8" height="8.6" rx="2.4" fill="#f6c6c9"/><path d="M3.8 7.6 V8 A4.2 4.2 0 0 0 12.2 8 V7.6"/><path d="M8 12.4 V14.4 M5.8 14.5 H10.2"/><path d="M13.8 0.8 L2.4 15.2" stroke-width="1.05"/></svg>
<svg class="abs" style="left:261px;top:4px" width="18" height="16" viewBox="0 0 18 16" fill="none" stroke="#8e8e9a" stroke-width="1.1" stroke-linejoin="round" stroke-linecap="round"><rect x="1.6" y="3.9" width="10.4" height="8.2" rx="2"/><path d="M12.3 7 L16.2 4.6 V11.4 L12.3 9 Z"/></svg>
</div>
<div class="row" style="top:434.9px">
<div class="av" style="background:#16a085;">DS</div>
<div class="nm" style="letter-spacing:-0.43px">DESA SENONI</div>
<svg class="abs" style="left:240px;top:4px" width="16" height="16" viewBox="0 0 16 16" fill="none" stroke="#e35d66" stroke-width="1" stroke-linecap="round"><rect x="5.6" y="1.6" width="4.8" height="8.6" rx="2.4" fill="#f6c6c9"/><path d="M3.8 7.6 V8 A4.2 4.2 0 0 0 12.2 8 V7.6"/><path d="M8 12.4 V14.4 M5.8 14.5 H10.2"/><path d="M13.8 0.8 L2.4 15.2" stroke-width="1.05"/></svg>
<svg class="abs" style="left:261px;top:4px" width="18" height="16" viewBox="0 0 18 16" fill="none" stroke="#8e8e9a" stroke-width="1.1" stroke-linejoin="round" stroke-linecap="round"><rect x="1.6" y="3.9" width="10.4" height="8.2" rx="2"/><path d="M12.3 7 L16.2 4.6 V11.4 L12.3 9 Z"/></svg>
</div>
<div class="row" style="top:473.2px">
<div class="av" style="background:#2c3e50;">DL</div>
<div class="nm" style="letter-spacing:0.06px">Dinas Lingkungan Hidup Kubar</div>
<svg class="abs" style="left:240px;top:4px" width="16" height="16" viewBox="0 0 16 16" fill="none" stroke="#e35d66" stroke-width="1" stroke-linecap="round"><rect x="5.6" y="1.6" width="4.8" height="8.6" rx="2.4" fill="#f6c6c9"/><path d="M3.8 7.6 V8 A4.2 4.2 0 0 0 12.2 8 V7.6"/><path d="M8 12.4 V14.4 M5.8 14.5 H10.2"/><path d="M13.8 0.8 L2.4 15.2" stroke-width="1.05"/></svg>
<svg class="abs" style="left:261px;top:4px" width="18" height="16" viewBox="0 0 18 16" fill="none" stroke="#8e8e9a" stroke-width="1.1" stroke-linejoin="round" stroke-linecap="round"><rect x="1.6" y="3.9" width="10.4" height="8.2" rx="2"/><path d="M12.3 7 L16.2 4.6 V11.4 L12.3 9 Z"/></svg>
</div>
<div class="row" style="top:511.5px">
<div class="av" style="background:#16a085;">EP</div>
<div class="nm" style="letter-spacing:-0.23px">Eka Puspita Rini</div>
<svg class="abs" style="left:240px;top:4px" width="16" height="16" viewBox="0 0 16 16" fill="none" stroke="#e35d66" stroke-width="1" stroke-linecap="round"><rect x="5.6" y="1.6" width="4.8" height="8.6" rx="2.4" fill="#f6c6c9"/><path d="M3.8 7.6 V8 A4.2 4.2 0 0 0 12.2 8 V7.6"/><path d="M8 12.4 V14.4 M5.8 14.5 H10.2"/><path d="M13.8 0.8 L2.4 15.2" stroke-width="1.05"/></svg>
<svg class="abs" style="left:261px;top:4px" width="18" height="16" viewBox="0 0 18 16" fill="none" stroke="#e35d66" stroke-width="1.1" stroke-linejoin="round" stroke-linecap="round"><rect x="1.6" y="3.9" width="10.4" height="8.2" rx="2"/><path d="M12.3 7 L16.2 4.6 V11.4 L12.3 9 Z"/><path d="M15.2 1 L2.2 15"/></svg>
</div>
<div class="row" style="top:549.8px">
<div class="av" style="background:#2980b9;">IS</div>
<div class="nm" style="letter-spacing:-0.06px">Indra Setiawan</div>
<svg class="abs" style="left:240px;top:4px" width="16" height="16" viewBox="0 0 16 16" fill="none" stroke="#e35d66" stroke-width="1" stroke-linecap="round"><rect x="5.6" y="1.6" width="4.8" height="8.6" rx="2.4" fill="#f6c6c9"/><path d="M3.8 7.6 V8 A4.2 4.2 0 0 0 12.2 8 V7.6"/><path d="M8 12.4 V14.4 M5.8 14.5 H10.2"/><path d="M13.8 0.8 L2.4 15.2" stroke-width="1.05"/></svg>
<svg class="abs" style="left:261px;top:4px" width="18" height="16" viewBox="0 0 18 16" fill="none" stroke="#e35d66" stroke-width="1.1" stroke-linejoin="round" stroke-linecap="round"><rect x="1.6" y="3.9" width="10.4" height="8.2" rx="2"/><path d="M12.3 7 L16.2 4.6 V11.4 L12.3 9 Z"/><path d="M15.2 1 L2.2 15"/></svg>
</div>
<div class="row" style="top:588.2px">
<div class="av" style="background:#2c3e50;font-size:13px;letter-spacing:0;">I</div>
<div class="nm" style="letter-spacing:0.20px">inspektorat</div>
<svg class="abs" style="left:240px;top:4px" width="16" height="16" viewBox="0 0 16 16" fill="none" stroke="#e35d66" stroke-width="1" stroke-linecap="round"><rect x="5.6" y="1.6" width="4.8" height="8.6" rx="2.4" fill="#f6c6c9"/><path d="M3.8 7.6 V8 A4.2 4.2 0 0 0 12.2 8 V7.6"/><path d="M8 12.4 V14.4 M5.8 14.5 H10.2"/><path d="M13.8 0.8 L2.4 15.2" stroke-width="1.05"/></svg>
<svg class="abs" style="left:261px;top:4px" width="18" height="16" viewBox="0 0 18 16" fill="none" stroke="#8e8e9a" stroke-width="1.1" stroke-linejoin="round" stroke-linecap="round"><rect x="1.6" y="3.9" width="10.4" height="8.2" rx="2"/><path d="M12.3 7 L16.2 4.6 V11.4 L12.3 9 Z"/></svg>
</div>
 <div class="abs" style="left:0;top:610.5px;width:300px;height:51px;background:#fff;"></div>
 <div class="btn" style="left:46px;width:41px;">Invite</div>
 <div class="btn" style="left:132px;width:56px;">Mute All</div>
 <div class="btn" style="left:233px;width:23px;">...</div>
<!--PANEL-END-->
</div>

<!-- TASKBAR -->
<div id="taskbar" class="abs">
 <div class="shade abs"></div>
<!--TASK-START-->
<div class="abs" style="left:172px;top:1.5px;width:55.5px;height:35px;box-sizing:border-box;border:1px solid rgba(205,220,240,0.45999999999999996);border-radius:3px;background:linear-gradient(150deg,rgba(255,255,255,0.44000000000000006) 0,rgba(255,255,255,0.26) 40%,rgba(255,255,255,0.08800000000000001) 55%,rgba(255,255,255,0.055999999999999994) 100%);"></div>
<div class="abs" style="left:520.5px;top:1.5px;width:54.5px;height:35px;box-sizing:border-box;border:1px solid rgba(205,220,240,0.42);border-radius:3px;background:linear-gradient(150deg,rgba(255,255,255,0.4) 0,rgba(255,255,255,0.22) 40%,rgba(255,255,255,0.066) 55%,rgba(255,255,255,0.041999999999999996) 100%);"></div>
<div class="abs" style="left:627.5px;top:1.5px;width:6px;height:35px;box-sizing:border-box;border:1px solid rgba(205,220,240,.6);border-radius:3px;background:rgba(255,255,255,.25);"></div>
<div class="abs" style="left:579px;top:1.5px;width:50px;height:35px;box-sizing:border-box;border:1px solid rgba(205,220,240,0.8500000000000001);border-radius:3px;background:linear-gradient(150deg,rgba(255,255,255,0.8300000000000001) 0,rgba(255,255,255,0.65) 40%,rgba(255,255,255,0.30250000000000005) 55%,rgba(255,255,255,0.1925) 100%);"></div>
<svg class="abs" style="left:6.5px;top:2px" width="37" height="37" viewBox="0 0 40 40">
<defs><radialGradient id="orb" cx=".5" cy=".95" r=".8"><stop offset="0" stop-color="#3fe0f8"/><stop offset=".35" stop-color="#1696da"/><stop offset=".7" stop-color="#1d5aa6"/><stop offset="1" stop-color="#3a5e92"/></radialGradient>
<linearGradient id="orbg" x1="0" x2="0" y1="0" y2="1"><stop offset="0" stop-color="#c5d6ea" stop-opacity=".75"/><stop offset="1" stop-color="#8fb0d6" stop-opacity=".25"/></linearGradient></defs>
<circle cx="20" cy="20" r="18.6" fill="url(#orb)" stroke="#9fb9da" stroke-opacity=".35" stroke-width="1.2"/>
<path d="M2.4 19 A17.6 17.6 0 0 1 37.6 19 Q30 22.5 20 19.5 Q10 16.5 2.4 19Z" fill="url(#orbg)"/>
<path d="M12 9.6 Q15.6 7.6 19.6 9.4 L18 17.6 Q14.4 16 10.4 18Z" fill="#ee5a24"/>
<path d="M21.4 10 Q25.4 11.8 29.6 9.4 L28 17.6 Q24 20 19.8 18.2Z" fill="#86c440"/>
<path d="M10 19.8 Q14 17.8 17.6 19.6 L16 27.8 Q12.2 26.2 8.4 28.2Z" fill="#52b5ee"/>
<path d="M19.4 20.2 Q23.6 22 27.6 19.6 L26 27.8 Q22 30.2 17.8 28.4Z" fill="#fbc734"/>
</svg>
<svg class="abs" style="left:68px;top:4px" width="31" height="31" viewBox="0 0 30 30">
<defs><radialGradient id="ffg" cx=".55" cy=".3" r=".7"><stop offset="0" stop-color="#3aa0ea"/><stop offset=".6" stop-color="#1c5cc0"/><stop offset="1" stop-color="#1a2a78"/></radialGradient>
<linearGradient id="ffo" x1="1" x2="0" y1="0" y2="1"><stop offset="0" stop-color="#ffe14a"/><stop offset=".35" stop-color="#f9a61e"/><stop offset=".7" stop-color="#f0641e"/><stop offset="1" stop-color="#e2421e"/></linearGradient></defs>
<circle cx="16" cy="13.6" r="11.4" fill="url(#ffg)"/>
<path d="M2.6 9.4 C1.4 14.6 1.4 22 8 26.8 C15 31.4 25.4 28.6 28.2 20.4 C29.8 15.4 28.8 8.6 24 4.6 C26 8.8 25.8 12.6 24.6 15.4 C24.4 19.6 21 22 17.6 21.6 C13.6 21.6 10.4 19.2 10 16.4 C11.4 17 13.2 16.8 14.2 15.6 C12.2 15 10.6 13.2 11 10.8 C9 10.2 7.6 8.6 7.6 6 C6 7.4 4 8 2.6 9.4Z" fill="url(#ffo)"/>
<path d="M24 4.6 C28.8 8.6 29.8 15.4 28.2 20.4 C27 23.6 25 26 22.4 27.4 C26 23 27.4 15 24 4.6Z" fill="#ffe14a" opacity=".8"/>
</svg>
<svg class="abs" style="left:125px;top:5px" width="30" height="28" viewBox="0 0 30 28">
<rect x="6" y="3" width="21" height="21" fill="#a9d2f0" opacity=".8"/><rect x="3.6" y="4.4" width="21" height="21" fill="#86bce8" opacity=".9"/>
<circle cx="13.6" cy="14.6" r="8" fill="#f08a1e"/><circle cx="13.6" cy="14.6" r="8" fill="none" stroke="#f8c27a" stroke-width="1"/>
<path d="M11 10 L18.4 14.6 L11 19.2Z" fill="#fff"/></svg>
<svg class="abs" style="left:184px;top:4px" width="32" height="30" viewBox="0 0 32 30">
<path d="M2 6 H13 L15 8.4 H29 V22 H2Z" fill="#e9c86a"/>
<rect x="3" y="5" width="4" height="2.4" fill="#4aa33a"/><rect x="9" y="5.6" width="4" height="2.4" fill="#d8452a"/><rect x="17" y="7" width="4" height="2.4" fill="#3a7ad0"/>
<path d="M1 10.6 H31 L29.6 24 H2.4Z" fill="#f6dd8c"/>
<path d="M5 17.6 H27 V28.6 H22.6 V23 H9.4 V28.6 H5Z" fill="#8cc4ee" stroke="#5a9ad0" stroke-width=".8"/>
<rect x="8" y="19.2" width="16" height="2.2" fill="#d8ecfa"/></svg>
<svg class="abs" style="left:242px;top:3px" width="31" height="31" viewBox="0 0 31 31">
<path d="M1 26 C1 10 3 3 9 2 H23 V8 H9 C7 9 6.6 18 6.6 27Z" fill="#3a6cc0"/>
<path d="M2.4 25 C2.4 11 4 4.6 9.4 3.6 H21.6 V7 H9 C6 8 5.4 18 5.4 26Z" fill="#9cc0ee"/>
<path d="M9 6.4 L29.6 9.6 L28.4 30 L7.6 26.4Z" fill="#f7f9fd" stroke="#b9c9e2" stroke-width=".7"/>
<text x="15.8" y="17.6" font-family="Liberation Sans, sans-serif" font-weight="bold" font-style="italic" font-size="9.5" text-anchor="middle" fill="#2a56b0">W</text>
<path d="M21.6 11.6 L27 12.4 M21.4 14.2 L26.8 15 M21.2 16.8 L26.6 17.6 M10.6 19.6 L26.4 21.6 M10.4 22.4 L26.2 24.4 M10.2 25 L26 27" stroke="#2f5cb4" stroke-width="1.5"/></svg>
<svg class="abs" style="left:301px;top:3px" width="32" height="32" viewBox="0 0 32 32">
<g transform="rotate(-4 16 16)">
<path d="M2.6 8.6 L25 2.4 L26.4 7 L4 13.2Z" fill="#1a1a1a"/><path d="M6.4 8.8 L9 11 M12.4 7.2 L15 9.4 M18.4 5.6 L21 7.8 M24 4 L26 6" stroke="#fff" stroke-width="2"/>
<path d="M3.4 12.6 H28.4 V16.4 H3.4Z" fill="#1a1a1a"/><path d="M7 13 L9.4 16 M13 13 L15.4 16 M19 13 L21.4 16 M25 13 L27.4 16" stroke="#fff" stroke-width="2"/>
<rect x="3.6" y="16" width="25" height="14.6" fill="#fafafa" stroke="#222" stroke-width="1.4"/>
<text x="9" y="28.6" font-family="Liberation Sans, sans-serif" font-weight="bold" font-size="12.5" text-anchor="middle" fill="#e0602a">3</text>
<text x="16.2" y="28.6" font-family="Liberation Sans, sans-serif" font-weight="bold" font-size="12.5" text-anchor="middle" fill="#3a7ad0">2</text>
<text x="23.4" y="28.6" font-family="Liberation Sans, sans-serif" font-weight="bold" font-size="12.5" text-anchor="middle" fill="#3a9a3a">1</text></g></svg>
<svg class="abs" style="left:357px;top:2px" width="34" height="34" viewBox="0 0 34 34">
<defs><radialGradient id="gom" cx=".4" cy=".35" r=".7"><stop offset="0" stop-color="#ffd27a"/><stop offset=".45" stop-color="#f79a1e"/><stop offset="1" stop-color="#d8600a"/></radialGradient></defs>
<ellipse cx="17" cy="20.6" rx="13.6" ry="11.6" fill="url(#gom)"/>
<circle cx="6.4" cy="10" r="3.2" fill="#f39a1e"/><circle cx="13" cy="5.6" r="3" fill="#f39a1e"/><circle cx="20" cy="4.8" r="2.6" fill="#f39a1e"/><circle cx="25.6" cy="7.4" r="2.2" fill="#f39a1e"/>
<ellipse cx="13.6" cy="17" rx="6.4" ry="4.6" fill="#fff" opacity=".85" transform="rotate(-18 13.6 17)"/></svg>
<svg class="abs" style="left:417px;top:4px" width="30" height="30" viewBox="0 0 30 30">
<circle cx="15" cy="15" r="13.6" fill="#5a8edc"/>
<path d="M15 15 L3.2 8.2 A13.6 13.6 0 0 1 26.8 8.2Z" fill="#7aa8ea"/>
<path d="M15 15 L26.8 8.2 A13.6 13.6 0 0 1 15 28.6Z" fill="#a9c6f2"/>
<circle cx="15" cy="15" r="6.4" fill="#fff"/><circle cx="15" cy="15" r="4.8" fill="#4a86e8"/></svg>
<svg class="abs" style="left:475px;top:4px" width="30" height="30" viewBox="0 0 30 30">
<circle cx="15" cy="15" r="13.6" fill="#2e9d48"/>
<path d="M15 15 L3.2 8.2 A13.6 13.6 0 0 1 26.8 8.2Z" fill="#db3b2b"/>
<path d="M15 15 L26.8 8.2 A13.6 13.6 0 0 1 15 28.6Z" fill="#f7c331"/>
<path d="M15 15 L3.2 8.2 L9.4 18.6Z" fill="#db3b2b"/>
<circle cx="15" cy="15" r="6.4" fill="#fff"/><circle cx="15" cy="15" r="4.8" fill="#4a86e8"/></svg>
<svg class="abs" style="left:532px;top:4px" width="34" height="30" viewBox="0 0 34 30">
<path d="M6.6 4.6 L19 8.6 L14 21 L1.4 16.6Z" fill="#9fd98c"/><path d="M9.4 11 L21 11 L21 24.4 L9 24.4Z" fill="#aed2f4"/><path d="M12.6 13 L27 8 L31.6 21.6 L17 26.6Z" fill="#fadc58"/></svg>
<svg class="abs" style="left:589px;top:4px" width="30" height="30" viewBox="0 0 30 30">
<rect x="1" y="1" width="28" height="28" rx="8" fill="#4a8cf7"/>
<rect x="6" y="10" width="12.4" height="10" rx="2.4" fill="#fff"/><path d="M19.4 13.6 L24.4 10.4 V19.6 L19.4 16.4Z" fill="#fff"/></svg>
<div class="abs" style="left:634px;top:2px;width:1px;height:34px;background:rgba(10,20,50,.5)"></div><div class="abs" style="left:635px;top:2px;width:1px;height:34px;background:rgba(160,185,220,.2)"></div>
<div class="tray" style="left:1053.5px;top:10.5px;font-size:11px;">EN</div>
<svg class="abs" style="left:1082px;top:17px" width="9" height="6" viewBox="0 0 9 6"><path d="M0.4 5.4 L4.5 0.8 L8.6 5.4Z" fill="#fff"/></svg>
<svg class="abs" style="left:1102px;top:12px" width="14" height="16" viewBox="0 0 14 16"><rect x="1.6" y="2.6" width="7" height="12" rx="1" fill="none" stroke="#fff" stroke-width="1.4"/><rect x="3.4" y="1" width="3.4" height="1.6" fill="#fff"/><path d="M7 5 H12 V9 Q12 11 9.6 11 Q7 11 7 9Z" fill="#fff" stroke="#1a2f55" stroke-width=".6"/><path d="M8.4 2.6 V5 M10.6 2.6 V5" stroke="#fff" stroke-width="1.1"/><path d="M9.4 11 V13.6 H6" stroke="#fff" stroke-width="1" fill="none"/></svg>
<svg class="abs" style="left:1126px;top:12px" width="14" height="16" viewBox="0 0 14 16"><path d="M1 5.6 H3.6 L7.6 1.4 V14.6 L3.6 10.4 H1Z" fill="#fff"/><path d="M9.6 5 Q11.6 8 9.6 11" stroke="#c9d6ea" stroke-width="1.1" fill="none"/></svg>
<svg class="abs" style="left:1148px;top:12px" width="15" height="16" viewBox="0 0 15 16"><path d="M1 4 L4 2 L7 4 L4 6Z M7 4 L10 2 L13 4 L10 6Z M1 8 L4 6 L7 8 L4 10Z" fill="#fff"/><path d="M6.4 13 Q6.6 6.6 10 6.4 Q13.4 6.6 13.6 13Z" fill="#f5b82e"/><rect x="5.8" y="12.6" width="8.4" height="1.4" fill="#f5b82e"/><circle cx="10" cy="14.6" r="1" fill="#f5b82e"/></svg>
<svg class="abs" style="left:1170px;top:14px" width="15" height="12" viewBox="0 0 15 12"><rect x="0.4" y="9" width="2" height="2.6" fill="#fff"/><rect x="3.4" y="7.4" width="2" height="4.2" fill="#fff"/><rect x="6.4" y="5.4" width="2" height="6.2" fill="#fff"/><rect x="9.4" y="3" width="2" height="8.6" fill="#fff"/><rect x="12.4" y="0.6" width="2" height="11" fill="#fff"/></svg>
<div class="tray" style="left:1198px;top:6.5px;width:60px;text-align:center;">9:56</div>
<div class="tray" style="left:1198px;top:22px;width:60px;text-align:center;">26/08/2020</div>
<div class="abs" style="left:1267px;top:1px;width:13px;height:37px;box-sizing:border-box;border:1px solid rgba(140,165,200,.7);border-right:none;background:linear-gradient(135deg,rgba(255,255,255,.28) 0,rgba(255,255,255,.08) 45%,rgba(0,0,0,.12) 100%);"></div>
<!--TASK-END-->
</div>

</div>
</body>
</html>
